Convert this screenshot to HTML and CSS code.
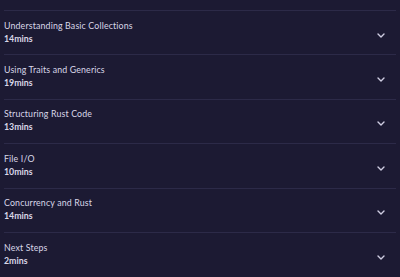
FILE: index.html
```html
<!DOCTYPE html>
<html lang="en">

    <head>
        <meta charset="UTF-8">
        <meta name="viewport" content="width=device-width, initial-scale=1.0">
        <title>Course Contents</title>

        <link rel="stylesheet" href="styles.css">
    </head>

    <body>
        <div class="lessons">
            <div class="lesson">
                <div class="lesson__info">
                    <h3>Understanding Basic Collections</h3>
                    <p>14mins</p>
                </div>
                <svg class="chevron" width="8" height="5" viewBox="0 0 8 5"><polyline points="1,1 4,4 7,1" /></svg>
            </div>
            <div class="lesson">
                <div class="lesson__info">
                    <h3>Using Traits and Generics</h3>
                    <p>19mins</p>
                </div>
                <svg class="chevron" width="8" height="5" viewBox="0 0 8 5"><polyline points="1,1 4,4 7,1" /></svg>
            </div>
            <div class="lesson">
                <div class="lesson__info">
                    <h3>Structuring Rust Code</h3>
                    <p>13mins</p>
                </div>
                <svg class="chevron" width="8" height="5" viewBox="0 0 8 5"><polyline points="1,1 4,4 7,1" /></svg>
            </div>
            <div class="lesson">
                <div class="lesson__info">
                    <h3>File I/O</h3>
                    <p>10mins</p>
                </div>
                <svg class="chevron" width="8" height="5" viewBox="0 0 8 5"><polyline points="1,1 4,4 7,1" /></svg>
            </div>
            <div class="lesson">
                <div class="lesson__info">
                    <h3>Concurrency and Rust</h3>
                    <p>14mins</p>
                </div>
                <svg class="chevron" width="8" height="5" viewBox="0 0 8 5"><polyline points="1,1 4,4 7,1" /></svg>
            </div>
            <div class="lesson">
                <div class="lesson__info">
                    <h3>Next Steps</h3>
                    <p>2mins</p>
                </div>
                <svg class="chevron" width="8" height="5" viewBox="0 0 8 5"><polyline points="1,1 4,4 7,1" /></svg>
            </div>
        </div>
    </body>

</html>
```

FILE: styles.css
```css
* {
    margin: 0;
    padding: 0;
    box-sizing: border-box;
}

html {
    height: 100%;
}

body {
    min-height: 100%;
    background-color: #1c1a33;
    color: #d9d7e8;
    font-family: Lato, "Liberation Sans", sans-serif;
    overflow: hidden;
}

.lessons {
    padding: 10px 4px 0;
}

.lesson {
    display: flex;
    align-items: center;
    justify-content: space-between;
    border-top: 1px solid #2c2a48;
    padding: 8.6px 11px 9.8px 0;
}

.lesson__info h3 {
    font-size: 8.8px;
    font-weight: 400;
    line-height: 12px;
    letter-spacing: 0.15px;
}

.lesson__info p {
    font-size: 8.8px;
    font-weight: 700;
    line-height: 13px;
}

.chevron {
    margin-top: 6px;
    fill: none;
    stroke: #cfcde2;
    stroke-width: 1.4;
    stroke-linecap: round;
    stroke-linejoin: round;
}
```
